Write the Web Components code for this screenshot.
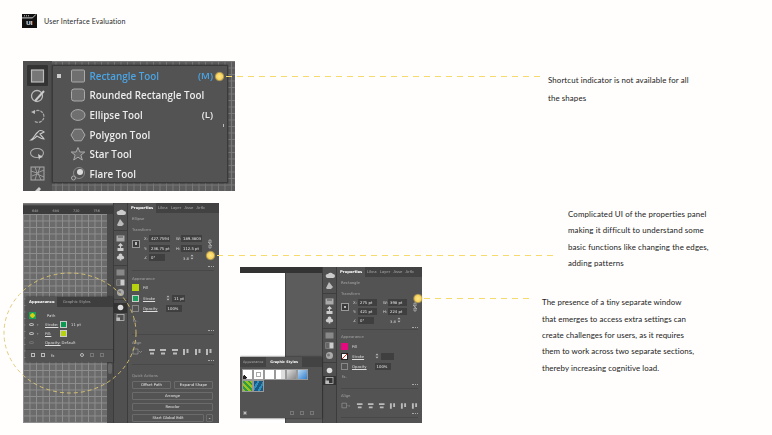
<!DOCTYPE html>
<html>
<head>
<meta charset="utf-8">
<style>
	html, body { margin: 0; padding: 0; background: #fffefd; }
</style>
</head>
<body>
<ui-slide>
	<slide-header>User Interface Evaluation</slide-header>
	<div style="display:flex;margin:33px 0 0 23px;height:130px">
		<tool-flyout></tool-flyout>
		<note-text style="margin:11px 0 0 313px;--lh:17.5px">Shortcut indicator is not available for all<br>the shapes</note-text>
	</div>
	<div style="display:flex;margin:12px 0 0 23px;height:220px">
		<canvas-shot></canvas-shot>
		<styles-shot></styles-shot>
		<div style="display:flex;flex-direction:column;margin-left:120px;width:200px">
			<note-text style="margin:3px 0 0 26px;letter-spacing:.12px">Complicated UI of the properties panel<br>making it difficult to understand some<br>basic functions like changing the edges,<br>adding patterns</note-text>
			<note-text style="margin-top:23px;letter-spacing:.06px">The presence of a tiny separate window<br>that emerges to access extra settings can<br>create challenges for users, as it requires<br>them to work across two separate sections,<br>thereby increasing cognitive load.</note-text>
		</div>
	</div>
	<callout-layer></callout-layer>
</ui-slide>

<script>
class Base extends HTMLElement
{
	constructor ()
	{
		super();
		this.attachShadow({mode:"open"});
	}
}

class UiSlide extends Base
{
	connectedCallback ()
	{
		this.shadowRoot.innerHTML = `
			<style>
				:host {
					display: flex;
					flex-direction: column;
					position: relative;
					width: 772px;
					height: 435px;
					overflow: hidden;
					background: #fffefd;
				}
			</style>
			<slot></slot>
		`;
	}
}
customElements.define("ui-slide", UiSlide);

class SlideHeader extends Base
{
	connectedCallback ()
	{
		this.shadowRoot.innerHTML = `
			<style>
				:host {
					display: flex;
					align-items: center;
					gap: 7px;
					margin: 14px 0 0 22px;
					height: 14px;
					font: 7.1px Lato, sans-serif;
					letter-spacing: .14px;
					color: #2a2a2a;
				}
				svg { display: block; }
			</style>
			<svg width="15" height="14" viewBox="0 0 15 14">
				<rect width="15" height="14" fill="#111"/>
				<path d="M0 3.9H10.5L14 .4" stroke="#fff" stroke-width=".8" fill="none"/>
				<path d="M2 1.8h1M4 1.8h1M6 1.8h1" stroke="#fff" stroke-width=".8"/>
				<text x="7.5" y="11.4" text-anchor="middle" font-family="Liberation Sans" font-weight="700" font-size="6" fill="#fff">UI</text>
			</svg>
			<span><slot></slot></span>
		`;
	}
}
customElements.define("slide-header", SlideHeader);

class NoteText extends Base
{
	connectedCallback ()
	{
		this.shadowRoot.innerHTML = `
			<style>
				:host {
					display: block;
					font: 7.9px/var(--lh, 16.35px) Lato, sans-serif;
					letter-spacing: .1px;
					color: #222;
					white-space: nowrap;
				}
			</style>
			<slot></slot>
		`;
	}
}
customElements.define("note-text", NoteText);

const ICON = {
	rect: `<rect x="1.5" y="2" width="13" height="12" rx="1" fill="#6f6f6f" stroke="#aaa"/>`,
	round: `<rect x="1.5" y="2" width="13" height="12" rx="2.5" fill="#6f6f6f" stroke="#aaa"/>`,
	ellipse: `<ellipse cx="8" cy="8" rx="7" ry="5.4" fill="#6f6f6f" stroke="#aaa"/>`,
	polygon: `<path d="M4.5 2.2H11.5L15 8L11.5 13.8H4.5L1 8Z" fill="#6f6f6f" stroke="#aaa"/>`,
	star: `<path d="M8 1.5L9.9 6H14.8L10.9 9.1L12.3 14L8 11.2L3.7 14L5.1 9.1L1.2 6H6.1Z" fill="#666" stroke="#aaa"/>`,
	flare: `<circle cx="9" cy="7" r="5.5" fill="none" stroke="#888"/><circle cx="10" cy="6" r="3" fill="#ddd"/><circle cx="3.5" cy="12" r="2" fill="#555" stroke="#aaa"/>`
};

class ToolFlyout extends Base
{
	connectedCallback ()
	{
		const rows = [
			["rect", "Rectangle Tool", "(M)"],
			["round", "Rounded Rectangle Tool", ""],
			["ellipse", "Ellipse Tool", "(L)"],
			["polygon", "Polygon Tool", ""],
			["star", "Star Tool", ""],
			["flare", "Flare Tool", ""]
		].map(([ic, name, key], i) => `
			<div class="row ${i == 0 ? "on" : ""}">
				<i></i>
				<svg width="16" height="16" viewBox="0 0 16 16">${ICON[ic]}</svg>
				<span>${name}</span>
				<b>${key}</b>
			</div>`).join("");
		const side = [
			`<rect x="2.5" y="3" width="12" height="12" fill="#777" stroke="#bbb" stroke-width="1.2"/>`,
			`<circle cx="8" cy="9" r="5.5" fill="none" stroke="#bbb" stroke-width="1.3"/><path d="M6 14L15 4" stroke="#ccc" stroke-width="2"/>`,
			`<path d="M4 6A6 6 0 1 1 5 14" fill="none" stroke="#aaa" stroke-width="1.2" stroke-dasharray="3 1"/><path d="M2 5l4-2v4z" fill="#bbb"/>`,
			`<path d="M2 14C5 12 6 8 9 6C10 4 13 4 15 6C13 7 12 8 11 8C12 10 14 11 15 13C12 13 10 11 8 10C6 12 4 14 2 14Z" fill="none" stroke="#ccc" stroke-width="1.1"/>`,
			`<ellipse cx="8" cy="8" rx="6.5" ry="4.5" fill="none" stroke="#aaa" stroke-width="1.1"/><path d="M9 9L14 12L11 13L10 15Z" fill="#ccc"/>`,
			`<rect x="2" y="2" width="13" height="13" fill="#555" stroke="#aaa"/><path d="M2 6L8 8L15 5M3 11L8 9L15 12M6 2L8 8L6 15M11 2L9 8L12 15" stroke="#aaa" fill="none" stroke-width=".8"/>`,
			`<path d="M5 8L10 3L12 5L8 10L5 12Z" fill="#ccc"/><path d="M14 7h4v5h-4z" fill="#888"/>`
		].map((s, i) => `<div class="tool ${i == 0 ? "on" : ""}"><svg width="17" height="17" viewBox="0 0 17 17">${s}</svg></div>`).join("");
		this.shadowRoot.innerHTML = `
			<style>
				:host {
					display: block;
					position: relative;
					width: 212px;
					height: 130px;
					overflow: hidden;
					filter: blur(.25px);
					background-color: #5c5c5c;
					background-image:
						linear-gradient(#7a7a7a 1px, transparent 1px),
						linear-gradient(90deg, #7a7a7a 1px, transparent 1px);
					background-size: 6.5px 6.5px;
				}
				.bar {
					position: absolute;
					left: 0;
					top: 0;
					width: 29px;
					height: 130px;
					background: #4f4f4f;
					display: flex;
					flex-direction: column;
					align-items: center;
					padding-top: 4px;
					box-sizing: border-box;
				}
				.tool {
					width: 21px;
					height: 19.4px;
					display: flex;
					align-items: center;
					justify-content: center;
					flex: none;
				}
				.tool.on { background: #333; height: 21px; border-radius: 1px; }
				.menu {
					position: absolute;
					left: 29px;
					top: 4px;
					width: 176px;
					height: 118px;
					box-sizing: border-box;
					background: #535353;
					border: 1px solid #3a3a3a;
					box-shadow: 0 0 2px #2a2a2a;
				}
				.row {
					display: flex;
					align-items: center;
					height: 19.6px;
					padding-left: 4px;
					font: 600 9.85px "Open Sans", sans-serif;
					color: #ececec;
				}
				.row i { width: 4px; height: 4px; margin-right: 9px; flex: none; }
				.row.on i { background: #ccc; }
				.row svg { flex: none; margin-right: 3.5px; }
				.row span { flex: 1; white-space: nowrap; }
				.row b { font-weight: 600; margin-right: 14px; font-size: 9.6px; }
				.row.on { color: #49a5e6; }
				.caret { position: absolute; right: 3px; top: 58px; width: 1.5px; height: 3px; background: #bbb; }
			</style>
			<div class="bar">${side}</div>
			<div class="menu">${rows}<div class="caret"></div></div>
		`;
	}
}
customElements.define("tool-flyout", ToolFlyout);

const PANEL_CSS = `
	.tabs {
		display: flex;
		align-items: center;
		height: 10px;
		background: #424242;
		color: #aaa;
		font: 3.8px "DejaVu Sans", sans-serif;
		white-space: nowrap;
	}
	.tabs span { padding: 0 1.6px; line-height: 10px; }
	.tabs .on { background: #535353; color: #fff; font-weight: 700; padding: 0 3px; }
`;

// the vertical tool strip between canvas and properties
class ToolStrip extends Base
{
	connectedCallback ()
	{
		const act = +this.getAttribute("active");
		const draw = [
			`<path d="M2 7a2 2 0 0 1 2-3a3 3 0 0 1 5 0a2 2 0 0 1 0 4H4a2 2 0 0 1-2-1z" fill="#ccc"/>`,
			`<path d="M2 8L5 2L9 7L7 9H3z" fill="#bbb"/>`,
			`<rect x="1.5" y="2.5" width="8" height="6" fill="#aaa"/><path d="M3 4h5" stroke="#555"/>`,
			`<path d="M5.5 1L8 3.5L6 4.5V6H8.5V9H2.5V6H5V4.5L3 3.5z" fill="#ccc"/>`,
			`<path d="M5.5 1.5a1.7 1.7 0 0 1 1.7 2.4a1.7 1.7 0 1 1-.8 3v1.6h-1.8V6.9a1.7 1.7 0 1 1-.8-3a1.7 1.7 0 0 1 1.7-2.4z" fill="#ccc"/>`,
			`<rect x="1.5" y="2.5" width="8" height="6" fill="#888"/>`,
			`<rect x="1.5" y="2.5" width="8" height="6" fill="#ccc"/><rect x="1.5" y="2.5" width="4" height="6" fill="#666"/>`,
			`<circle cx="5.5" cy="5.5" r="3.5" fill="#aaa"/><circle cx="4.5" cy="5" r="1.5" fill="#777"/>`,
			`<circle cx="5.5" cy="5.5" r="2.8" fill="#ddd"/>`,
			`<rect x="2" y="2.5" width="7" height="6" fill="none" stroke="#bbb" stroke-width=".8"/><rect x="1.5" y="5.5" width="3.5" height="3.5" fill="#bbb"/>`
		];
		const groups = [[0,1],[2,3,4],[5,6,7],[8,9]];
		this.shadowRoot.innerHTML = `
			<style>
				:host {
					display: flex;
					flex-direction: column;
					flex: none;
					width: 15px;
					box-sizing: border-box;
					padding-top: var(--top, 3px);
					background: #505050;
					border-left: 1px solid #3c3c3c;
					border-right: 1px solid #3c3c3c;
				}
				.g { padding: 1px 0 2.5px; border-bottom: 1px solid #3e3e3e; margin-bottom: 1.6px; }
				.g:last-child { border: 0; }
				.i { height: 9.6px; display: flex; align-items: center; justify-content: center; }
				.i.on { background: #333; }
				svg { display: block; }
			</style>
			${groups.map(g => `<div class="g">${g.map(n => `<div class="i ${n == act ? "on" : ""}"><svg width="11" height="11" viewBox="0 0 11 11">${draw[n]}</svg></div>`).join("")}</div>`).join("")}
		`;
	}
}
customElements.define("tool-strip", ToolStrip);

// the Properties panel of the application, shared by both screenshots
class PropsPanel extends Base
{
	connectedCallback ()
	{
		const a = n => this.getAttribute(n) || "";
		const quick = this.hasAttribute("quick");
		const dots = k => `<div class="dots ${k}"><u></u></div>`;
		const align = [1,2,3,4,5,6].map(n => `<svg width="8" height="7" viewBox="0 0 8 7"><path d="${n < 4 ? "M1 1h6v2H1zM2 4.5h4v2H2z" : "M1 1h2v6H1zM4.5 1h2v4h-2z"}" fill="#bbb"/></svg>`).join("");
		const chain = `<svg class="chain" width="6" height="10" viewBox="0 0 6 10"><path d="M2 1h2v3H2zM2 6h2v3H2zM1 3L5 7" fill="none" stroke="#bbb" stroke-width=".7"/></svg>`;
		const step = `<svg width="4" height="6" viewBox="0 0 4 6"><path d="M2 .5L3.5 2.2H.5zM2 5.5L3.5 3.8H.5z" fill="#bbb"/></svg>`;
		this.shadowRoot.innerHTML = `
			<style>
				${PANEL_CSS}
				:host {
					display: block;
					flex: 1;
					min-width: 0;
					background: #535353;
					color: #d4d4d4;
					font: 3.8px "DejaVu Sans", sans-serif;
					white-space: nowrap;
				}
				.body { padding: 0 var(--pad-r, 5px) 0 4px; }
				.name { height: 11px; line-height: 12px; color: #aaa; }
				.head { height: 10px; line-height: 12px; color: #a4a4a4; }
				.grid {
					display: grid;
					grid-template-columns: 12px 5px var(--fw, 21px) 6px 5px var(--fw, 21px) 4px 7px;
					grid-auto-rows: var(--row, 9.5px);
					align-items: center;
				}
				.ref { grid-row: 1 / span 2; grid-column: 1; width: 8px; height: 8px; border: 1px solid #999; background: #3c3c3c; box-sizing: border-box; display: flex; align-items: center; justify-content: center; }
				.ref::after { content: ""; width: 2.5px; height: 2.5px; background: #bbb; }
				.chain { grid-row: 1 / span 2; grid-column: 8; justify-self: center; }
				.grid .n { grid-column: 2; }
				.grid .m { grid-column: 5; }
				.f { background: #3f3f3f; color: #e6e6e6; height: 7px; line-height: 7px; padding-left: 2px; overflow: hidden; box-sizing: border-box; }
				.dots { height: var(--dots, 7px); display: flex; justify-content: flex-end; align-items: center; border-bottom: 1px solid #484848; }
				.dots.a { height: var(--dots-a, 7px); }
				.dots u { width: 6px; border-top: 1px dotted #aaa; }
				.ap { display: flex; align-items: center; height: var(--ap, 10.5px); color: #ddd; }
				.ap > span:first-of-type { margin-left: 4px; }
				.sw { width: 7px; height: 7px; flex: none; box-sizing: border-box; }
				.sw.x { border: 1px solid #888; }
				.al { display: flex; gap: 3.5px; align-items: center; height: 10px; }
				.al svg:first-child { margin-right: 2px; }
				.btns { display: grid; grid-template-columns: 1fr 1fr; gap: 3px; margin: 2px 1px 0 0; }
				.btn { border: 1px solid #6b6b6b; height: 8px; line-height: 6px; text-align: center; color: #e6e6e6; border-radius: 1px; box-sizing: border-box; }
				.w { grid-column: span 2; }
				.lg { display: flex; gap: 2px; }
				.lg .btn:first-child { flex: 1; }
				.lg .btn:last-child { width: 7px; }
			</style>
			<div class="tabs"><span class="on">Properties</span><span>Libra</span><span>Layer</span><span>Asse</span><span>Artb</span></div>
			<div class="body">
				<div class="name">${a("shape")}</div>
				<div class="head">Transform</div>
				<div class="grid">
					<div class="ref"></div>${chain}
					<span class="n">X:</span><div class="f">${a("x")}</div><span class="m">W:</span><div class="f">${a("w")}</div>
					<span class="n">Y:</span><div class="f">${a("y")}</div><span class="m">H:</span><div class="f">${a("h")}</div>
					<span class="n">∠</span><div class="f" style="width:16px">0°</div><span class="m" style="grid-column:5 / span 2;margin-left:7px">3.8 ${step}</span>
				</div>
				${dots("a")}
				<div class="head" style="margin-top:var(--gap, 2px)">Appearance</div>
				<div class="ap"><div class="sw" style="background:${a("fill")}"></div><span>Fill</span></div>
				<div class="ap"><div class="sw" style="${a("strokecss")}"></div><span style="text-decoration:underline;margin-right:11px">Stroke</span>${step}<div class="f" style="width:13px;margin-left:2px">${a("stroke")}</div></div>
				<div class="ap"><div class="sw x"></div><span style="text-decoration:underline;margin-right:8px">Opacity</span><div class="f" style="width:16px">100%</div></div>
				<div class="ap" style="height:var(--fx, 12.5px)"><span style="margin-left:1px;color:#aaa">fx.</span></div>
				${dots("")}
				<div class="head" style="margin-top:var(--gap, 2px)">Align</div>
				<div class="al"><svg width="10" height="7" viewBox="0 0 10 7"><path d="M1 1h5v5H1zM7 3l1.5 1.5L10 3" fill="none" stroke="#999" stroke-width=".7"/></svg>${align}</div>
				${dots("")}
				${quick ? `
				<div class="head" style="margin-top:4px;line-height:13px">Quick Actions</div>
				<div class="btns">
					<div class="btn">Offset Path</div><div class="btn">Expand Shape</div>
					<div class="btn w">Arrange</div>
					<div class="btn w">Recolor</div>
					<div class="w lg"><div class="btn">Start Global Edit</div><div class="btn">⌄</div></div>
				</div>` : ""}
			</div>
		`;
	}
}
customElements.define("props-panel", PropsPanel);

class CanvasShot extends Base
{
	connectedCallback ()
	{
		this.shadowRoot.innerHTML = `
			<style>
				${PANEL_CSS}
				:host {
					display: flex;
					flex: none;
					position: relative;
					width: 196px;
					height: 220px;
					overflow: hidden;
					filter: blur(.25px);
					background: #535353;
				}
				.canvas {
					width: 90px;
					flex: none;
					display: flex;
					flex-direction: column;
					background: #4b4b4b;
					position: relative;
				}
				.top { height: 5px; background: linear-gradient(#8a8a8a, #3c3c3c 60%); }
				.ruler {
					display: flex;
					gap: 14px;
					height: 6px;
					padding-left: 9px;
					background: #3c3c3c;
					color: #aaa;
					font: 3.4px/6px "DejaVu Sans", sans-serif;
				}
				.grid {
					flex: 1;
					margin-right: 6px;
					background-color: #6b6b6b;
					background-image:
						linear-gradient(#8e8e8e 1px, transparent 1px),
						linear-gradient(90deg, #8e8e8e 1px, transparent 1px);
					background-size: 6.5px 6.5px;
				}
				.thumb { position: absolute; right: 1px; top: 160px; width: 4px; height: 11px; border-radius: 2px; background: #666; }
				.look {
					position: absolute;
					left: 3px;
					top: 94px;
					width: 87px;
					height: 65px;
					background: #535353;
					box-shadow: 0 0 2px #222;
					color: #ddd;
					font: 3.8px "DejaVu Sans", sans-serif;
				}
				.tabs { background: #3e3e3e; }
				.tabs span:nth-child(2) { margin-left: 4px; }
				.r { display: flex; align-items: center; height: 9px; padding-left: 3px; }
				.eye { width: 5px; height: 3px; border: .6px solid #bbb; border-radius: 50%; margin-right: 3px; box-sizing: border-box; flex: none; }
				.chev { width: 6px; }
				.lab { width: 15px; text-decoration: underline; }
				.sw { width: 7px; height: 7px; border: 1px solid #ccc; box-sizing: border-box; flex: none; }
				.foot { display: flex; align-items: center; padding: 3px 0 0 5px; border-top: 1px solid #444; margin-top: 2.5px; }
				.foot u { width: 4px; height: 4px; border: 1px solid #bbb; box-sizing: border-box; margin-right: 6px; text-decoration: none; }
				.foot u.d { border-color: #777; }
			</style>
			<div class="canvas">
				<div class="top"></div>
				<div class="ruler"><span>648</span><span>684</span><span>720</span><span>756</span></div>
				<div class="grid"></div>
				<div class="thumb"></div>
			</div>
			<tool-strip active="8" style="--top:4px"></tool-strip>
			<props-panel quick shape="Ellipse" x="427.7594" w="189.3803" y="236.75 pt" h="112.5 pt"
				fill="#b7d30e" strokecss="background:#1aa05b;border:1px solid #ccc" stroke="11 pt"></props-panel>
			<div class="look">
				<div class="tabs"><span class="on">Appearance</span><span>Graphic Styles</span></div>
				<div class="r" style="margin-top:3.5px;padding-left:3px">
					<div class="sw" style="background:radial-gradient(#d8cf10 40%,#1aa05b 50%);border:0"></div>
					<span style="margin-left:11px">Path</span></div>
				<div class="r"><div class="eye"></div><span class="chev">›</span><span class="lab" style="margin-left:2px">Stroke:</span><div class="sw" style="background:#0c9a52"></div><span style="margin-left:4px">11 pt</span></div>
				<div class="r"><div class="eye"></div><span class="chev">›</span><span class="lab" style="margin-left:2px">Fill:</span><div class="sw" style="background:#b7d30e"></div></div>
				<div class="r"><div class="eye" style="opacity:.3"></div><span class="chev"></span><span class="lab" style="margin-left:2px;width:auto">Opacity:</span><span style="margin-left:1px">Default</span></div>
				<div class="foot"><u></u><u></u><u style="border:0;margin-right:25px">fx</u><u style="border-radius:50%"></u><u class="d"></u><u class="d"></u></div>
			</div>
		`;
	}
}
customElements.define("canvas-shot", CanvasShot);

class StylesShot extends Base
{
	connectedCallback ()
	{
		const sw = [
			"background:radial-gradient(circle at 15% 85%,#222 20%,#fff 22%)",
			"background:#fff;box-shadow:inset 0 0 0 2px #fff,inset 0 0 0 3px #aaa",
			"background:#fff",
			"background:linear-gradient(90deg,#fff 50%,#ddd 50%)",
			"background:linear-gradient(135deg,#ddd,#888)",
			"background:linear-gradient(135deg,#bcd9f2,#2f7fd0)",
			"background:repeating-linear-gradient(45deg,#9bc31c 0 2px,#2f9c45 2px 4px)",
			"background:repeating-linear-gradient(120deg,#1a5a80 0 3px,#2f8fc0 3px 5px)"
		].map(s => `<div class="s"><div style="${s}"></div></div>`).join("");
		this.shadowRoot.innerHTML = `
			<style>
				${PANEL_CSS}
				:host {
					display: flex;
					flex: none;
					align-self: flex-end;
					position: relative;
					margin-left: 21px;
					width: 182px;
					height: 156px;
					overflow: hidden;
					filter: blur(.25px);
					background: #5a5a5a;
				}
				.stage { width: 82px; flex: none; display: flex; flex-direction: column; }
				.top { height: 6px; background: #333; }
				.art { flex: 1; display: flex; }
				.art div:first-child { width: 45px; background: #fff; }
				.art div:last-child { flex: 1; background: #5c5c5c; border-left: 1px solid #444; }
				.win {
					position: absolute;
					left: 0;
					top: 90px;
					width: 82px;
					height: 61px;
					background: #535353;
					box-shadow: 0 0 2px #222;
					display: flex;
					flex-direction: column;
				}
				.tabs { background: #434343; font-size: 3.4px; }
				.tabs .off { padding: 0 3px; }
				.tabs .on { padding: 0 4px; }
				.sws {
					display: grid;
					grid-template-columns: repeat(6, 10.8px);
					grid-auto-rows: 11.6px;
					gap: .3px;
					padding: 1.5px 0 0 2px;
					flex: 1;
					align-content: start;
				}
				.s { border: .7px solid #999; box-sizing: border-box; background: #fff; }
				.s div { width: 100%; height: 100%; }
				.foot { display: flex; align-items: center; gap: 6px; height: 10px; padding-left: 3px; }
				.foot u { width: 4px; height: 4px; border: 1px solid #777; box-sizing: border-box; }
			</style>
			<div class="stage">
				<div class="top"></div>
				<div class="art"><div></div><div></div></div>
			</div>
			<tool-strip active="9" style="--top:3px"></tool-strip>
			<props-panel shape="Rectangle" x="275 pt" w="398 pt" y="421 pt" h="224 pt"
				fill="#e6087f" strokecss="background:linear-gradient(135deg,#fff 45%,#d22 45%,#d22 55%,#fff 55%);border:1px solid #222"
				style="--fw:19px;--pad-r:4px;--row:9px;--dots-a:4px;--dots:7px;--gap:1px;--ap:10px;--fx:10px"></props-panel>
			<div class="win">
				<div class="tabs"><span class="off">Appearance</span><span class="on">Graphic Styles</span></div>
				<div class="sws">${sw}</div>
				<div class="foot"><u style="background:#bbb;margin-right:37px"></u><u></u><u></u><u></u></div>
			</div>
		`;
	}
}
customElements.define("styles-shot", StylesShot);

// dashed connectors and the marker dots, drawn over everything
class CalloutLayer extends Base
{
	connectedCallback ()
	{
		const dot = (x, y) => `<circle cx="${x}" cy="${y}" r="5.2" fill="url(#glow)"/>`;
		this.shadowRoot.innerHTML = `
			<style>
				:host { position: absolute; inset: 0; pointer-events: none; }
				svg { display: block; }
			</style>
			<svg width="772" height="435">
				<defs>
					<radialGradient id="glow">
						<stop offset="0" stop-color="#fce88e"/>
						<stop offset=".6" stop-color="#f8d25a"/>
						<stop offset="1" stop-color="#f8d25a" stop-opacity="0"/>
					</radialGradient>
				</defs>
				<ellipse cx="70" cy="333" rx="66" ry="60" fill="none" stroke="#dcc570" stroke-width=".9" stroke-dasharray="4 3"/>
				<g stroke="#f6da6c" stroke-width="1" stroke-dasharray="6 5">
					<path d="M226 76.5H541"/>
					<path d="M217 255.5H558"/>
					<path d="M424 298.5H534"/>
				</g>
				${dot(219.5, 76.5)}${dot(210.5, 255.5)}${dot(418, 298.5)}
			</svg>
		`;
	}
}
customElements.define("callout-layer", CalloutLayer);
</script>
</body>
</html>
